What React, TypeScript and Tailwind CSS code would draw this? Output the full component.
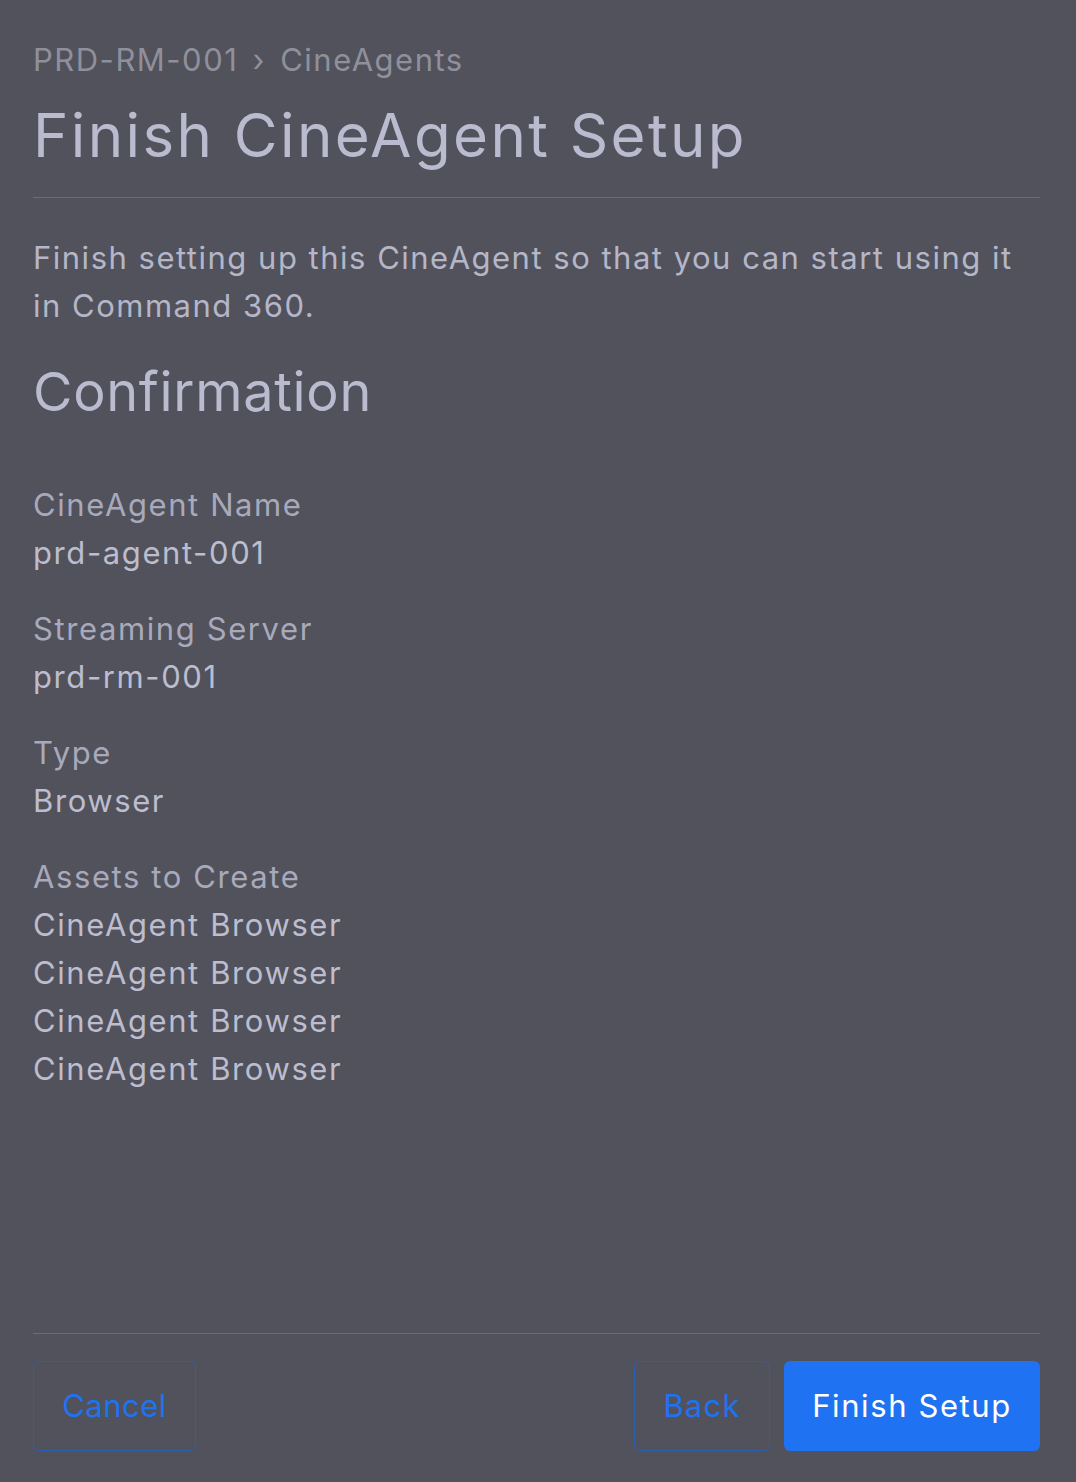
import React from "react";

const FONT = { fontFamily: "Inter, 'Noto Sans', 'DejaVu Sans', sans-serif" };

function Field({ label, values }: { label: string; values: string[] }) {
  return (
    <div className="flex flex-col">
      <div className="text-[31px] leading-[48px] text-[#a8a9bb] tracking-[1.6px]">{label}</div>
      {values.map((v, i) => (
        <div key={i} className="text-[31px] leading-[48px] text-[#bcbdcf] tracking-[1.6px]">
          {v}
        </div>
      ))}
    </div>
  );
}

export default function App() {
  return (
    <div
      style={FONT}
      className="min-h-screen w-full bg-[#51525b] flex flex-col px-[33px] pr-[36px] pb-[31px] font-[380]"
    >
      <div className="pt-9 text-[31px] leading-[48px] text-[#8f909b] tracking-[1.5px]">
        PRD-RM-001 <span className="mx-1">›</span> CineAgents
      </div>
      <h1 className="mt-[14px] text-[60px] leading-[74px] text-[#babbce] tracking-[2.4px]">
        Finish CineAgent Setup
      </h1>
      <div className="mt-[25px] border-t border-[#6b6c74]" />
      <p className="mt-[36px] text-[31px] leading-[48px] text-[#b5b6c8] tracking-[1.5px]">
        Finish setting up this CineAgent so that you can start using it in Command 360.
      </p>
      <h2 className="mt-[28px] text-[54px] leading-[68px] text-[#babbce] tracking-[0.7px]">
        Confirmation
      </h2>
      <div className="mt-[55px] flex flex-col gap-[28px]">
        <Field label="CineAgent Name" values={["prd-agent-001"]} />
        <Field label="Streaming Server" values={["prd-rm-001"]} />
        <Field label="Type" values={["Browser"]} />
        <Field
          label="Assets to Create"
          values={["CineAgent Browser", "CineAgent Browser", "CineAgent Browser", "CineAgent Browser"]}
        />
      </div>
      <div className="flex-1" />
      <div className="border-t border-[#6b6c74]" />
      <div className="mt-[27px] flex items-center">
        <button className="h-[90px] w-[163px] rounded-[6px] border border-[#2d5fb0] text-[31px] text-[#1f72f0] tracking-[0.5px]">
          Cancel
        </button>
        <div className="flex-1" />
        <button className="h-[90px] w-[136px] rounded-[6px] border border-[#2d5fb0] text-[31px] text-[#1f72f0] tracking-[1.2px]">
          Back
        </button>
        <button className="ml-[14px] h-[90px] w-[256px] rounded-[6px] bg-[#1f72f2] text-[31px] text-white tracking-[1.6px]">
          Finish Setup
        </button>
      </div>
    </div>
  );
}
